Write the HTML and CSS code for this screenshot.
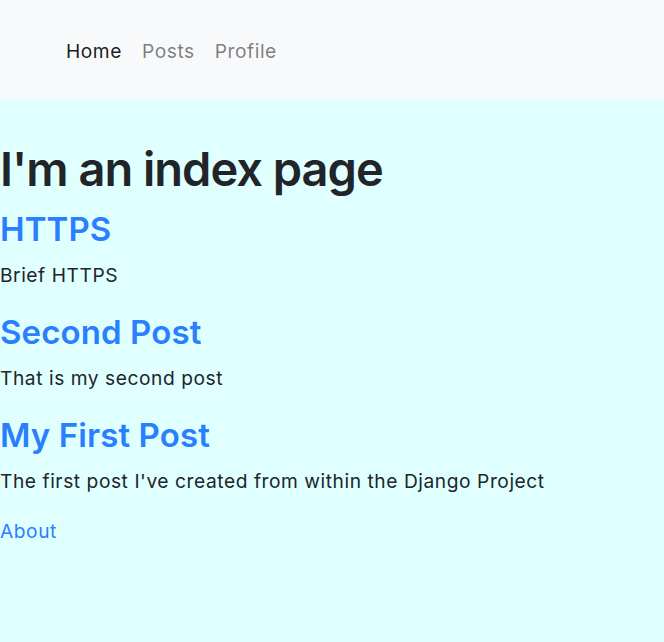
FILE: index.html
```html
<!DOCTYPE html>
<html lang="en">
<head>
<meta charset="utf-8">
<title>Index</title>
<link rel="stylesheet" href="styles.css">
</head>
<body>
<nav class="navbar">
  <ul class="nav-list">
    <li><a class="nav-link active" href="#">Home</a></li>
    <li><a class="nav-link" href="#">Posts</a></li>
    <li><a class="nav-link" href="#">Profile</a></li>
  </ul>
</nav>
<main class="content">
  <h1 class="page-title">I'm an index page</h1>
  <article class="post">
    <h2 class="post-title"><a href="#">HTTPS</a></h2>
    <p class="post-brief">Brief HTTPS</p>
  </article>
  <article class="post">
    <h2 class="post-title"><a href="#">Second Post</a></h2>
    <p class="post-brief">That is my second post</p>
  </article>
  <article class="post">
    <h2 class="post-title"><a href="#">My First Post</a></h2>
    <p class="post-brief">The first post I've created from within the Django Project</p>
  </article>
  <a class="about-link" href="#">About</a>
</main>
</body>
</html>
```

FILE: styles.css
```css
html, body {
  margin: 0;
  padding: 0;
}
body {
  background: #e0ffff;
  font-family: Inter, "Noto Sans", sans-serif;
  font-size: 19.2px;
  line-height: 28.8px;
  color: #212529;
  letter-spacing: 0.55px;
  min-height: 642px;
}
.navbar {
  background: #f8f9fa;
  height: 99px;
  display: flex;
  align-items: center;
  padding: 3px 0 0 56px;
  box-sizing: border-box;
  border-radius: 6px 0 0 6px;
}
.nav-list {
  list-style: none;
  margin: 0;
  padding: 0;
  display: flex;
}
.nav-link {
  display: block;
  padding: 0 10px;
  color: rgba(0, 0, 0, 0.5);
  text-decoration: none;
}
.nav-link.active {
  color: rgba(0, 0, 0, 0.9);
}
.content {
  padding-top: 42px;
}
.page-title {
  font-size: 47px;
  line-height: 56px;
  font-weight: 600;
  margin: 0 0 12px;
  letter-spacing: -1px;
}
.post-title {
  font-size: 33px;
  line-height: 40px;
  font-weight: 600;
  letter-spacing: 0.1px;
  margin: 0 0 12px;
}
.post-title a,
.about-link {
  color: #2a7ffc;
  text-decoration: none;
}
.post-brief {
  margin: 0 0 22px;
}
```
